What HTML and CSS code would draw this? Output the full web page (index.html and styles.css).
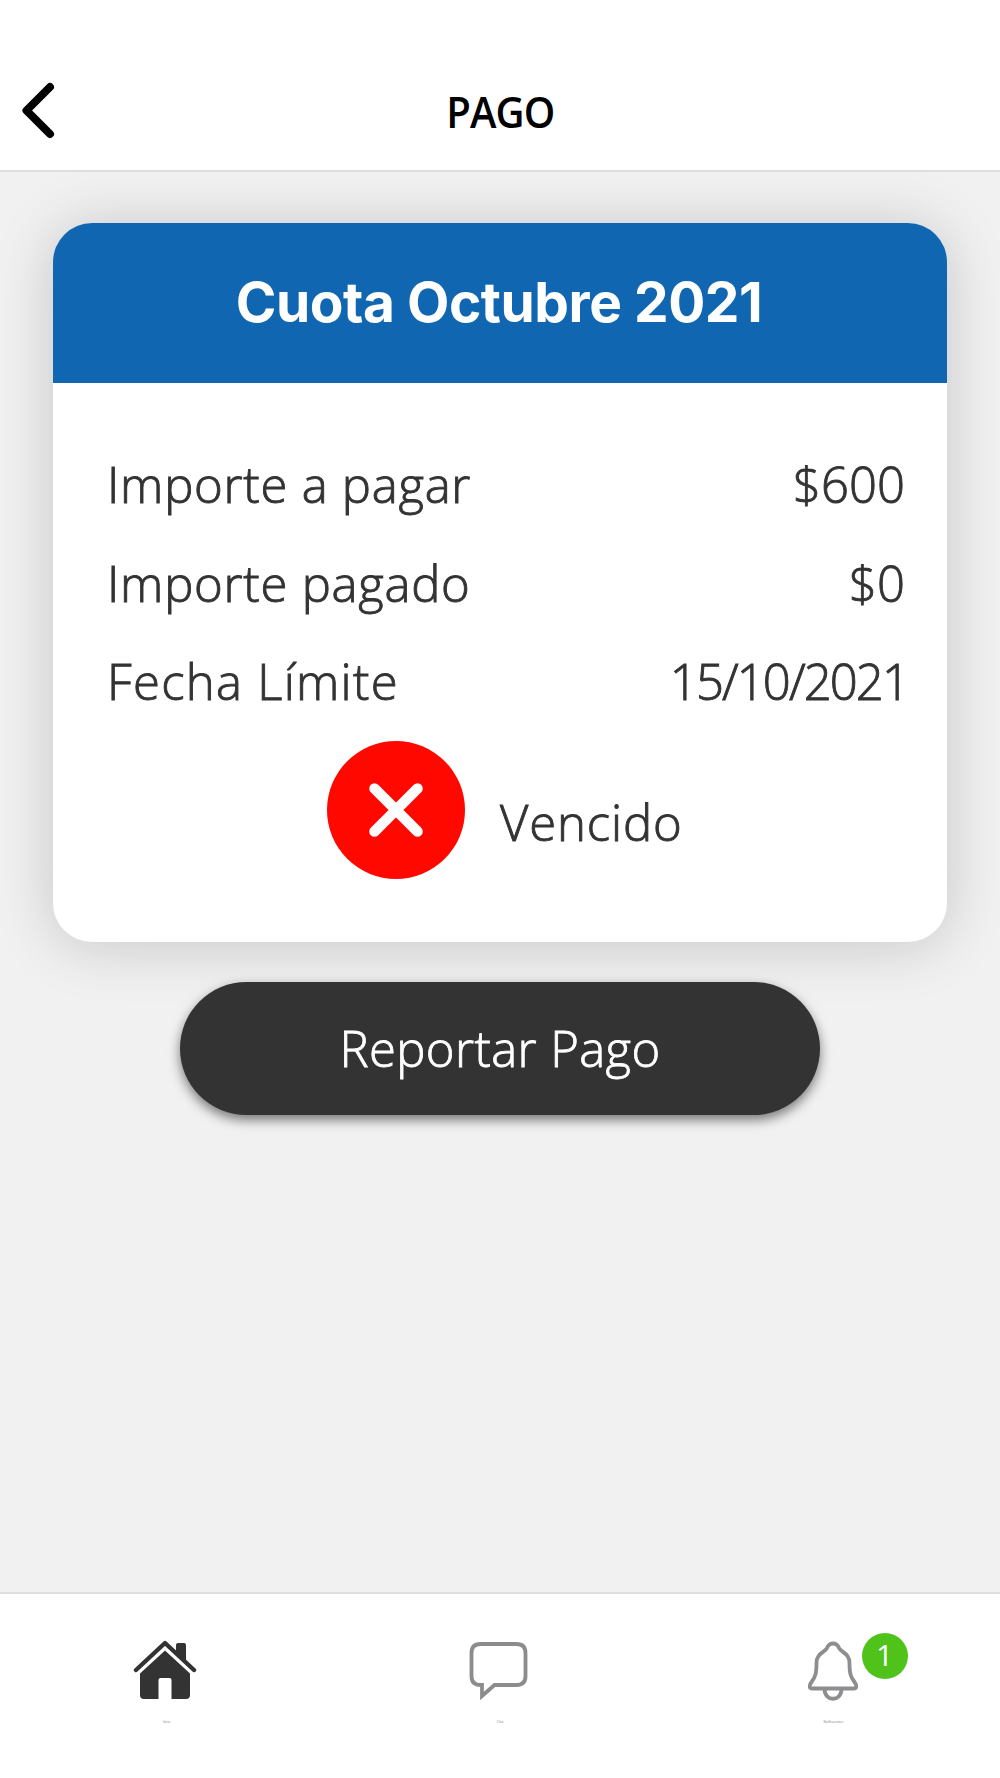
FILE: index.html
```html
<!DOCTYPE html>
<html lang="es">
<head>
<meta charset="utf-8">
<title>Pago</title>
<link rel="stylesheet" href="styles.css">
</head>
<body>
<div class="app">
  <header class="topbar">
    <svg class="back" viewBox="0 0 36 60" fill="none" stroke="#000" stroke-width="8" stroke-linecap="round" stroke-linejoin="round"><path d="M31 7 7.500 30.500 31 54"/></svg>
    <h1 class="title"><span>PAGO</span></h1>
  </header>
  <main class="content">
    <section class="card">
      <h2 class="card-head"><span>Cuota Octubre 2021</span></h2>
      <div class="card-body">
        <div class="row"><span class="amount-label">Importe a pagar</span><span class="amount">$600</span></div>
        <div class="row"><span class="amount-label">Importe pagado</span><span class="amount">$0</span></div>
        <div class="row"><span class="date-label">Fecha Límite</span><span class="date">15/10/2021</span></div>
        <div class="status">
          <svg class="status-icon" viewBox="0 0 138 138"><circle cx="69" cy="69" r="69" fill="#ff0800"/><path d="M47.500 47.500 90.500 90.500M90.500 47.500 47.500 90.500" stroke="#fff" stroke-width="10.500" stroke-linecap="round"/></svg>
          <span class="status-text">Vencido</span>
        </div>
      </div>
    </section>
    <button class="report"><span>Reportar Pago</span></button>
  </main>
  <nav class="tabs">
    <a class="tab active">
      <svg class="icon" viewBox="0 0 66 64"><path fill="#333" d="M7 34.500 32 11.500 57 34.500V56q0 4-4 4H38.500V41q0-2-2-2H27.500q-2 0-2 2v19H11q-4 0-4-4Z"/><path d="M2.500 29.500 32 2.500 61.500 29.500" fill="none" stroke="#fff" stroke-width="11"/><path d="M43 6q0-2 2-2h6q2 0 2 2V23L43 13Z" fill="#333"/><path d="M3 31 32 4 61 31" fill="none" stroke="#333" stroke-width="4.400" stroke-linecap="round" stroke-linejoin="round"/></svg>
      <span class="label">Inicio</span>
    </a>
    <a class="tab">
      <svg class="icon" viewBox="0 0 66 64" fill="none" stroke="#8c8c8c" stroke-width="3.800"><path d="M13.500 5H49.500Q58.500 5 58.500 14V37Q58.500 46 49.500 46H27.500L15 57V46H13.500Q4.500 46 4.500 37V14Q4.500 5 13.500 5Z"/></svg>
      <span class="label">Chat</span>
    </a>
    <a class="tab">
      <svg class="icon" viewBox="0 0 66 64" fill="none" stroke="#8e8e90" stroke-width="3.800" stroke-linejoin="round"><path d="M33 4.500C29.500 4.500 28 6.500 27 9C25 13.500 16.500 14 16.500 24C16.500 34 15.500 38 11.500 43C8.500 47 9.500 49.500 12.500 49.500H53.500C56.500 49.500 57.500 47 54.500 43C50.500 38 49.500 34 49.500 24C49.500 14 41 13.500 39 9C38 6.500 36.500 4.500 33 4.500Z"/><path d="M24.500 50C24.500 63 41.500 63 41.500 50"/></svg>
      <span class="label">Notificaciones</span>
      <span class="badge">1</span>
    </a>
  </nav>
</div>
</body>
</html>
```
FILE: styles.css
```css
* { box-sizing: border-box; }
body { margin: 0; }
.app {
  display: flex;
  flex-direction: column;
  width: 1000px;
  height: 1778px;
  background: #f1f1f1;
  color: #333;
  font-family: "Open Sans", sans-serif;
  font-size: 49px;
  font-weight: 300;
}
.topbar {
  display: grid;
  grid-template-columns: 60px 1fr 60px;
  align-items: center;
  height: 172px;
  padding-top: 50px;
  background: #fff;
  border-bottom: 2px solid #dedede;
}
.back { width: 36px; height: 60px; margin-left: 19px; }
.title {
  margin: 1px 0 0;
  text-align: center;
  color: #000;
  font-size: 44px;
  font-weight: 600;
  line-height: 60px;
  letter-spacing: -1px;
}
.title span { display: inline-block; transform: scaleX(.91); }
.content {
  flex: 1;
  display: flex;
  flex-direction: column;
  align-items: center;
  padding-top: 51px;
  overflow: hidden;
}
.card {
  width: 894px;
  height: 719px;
  border-radius: 39px;
  background: #fff;
  box-shadow: 0 3px 60px rgba(0, 0, 0, .18);
  overflow: hidden;
  flex: none;
}
.card-head {
  height: 160px;
  margin: 0;
  padding-right: 2px;
  background: #1066b0;
  color: #fff;
  text-align: center;
  font-family: Inter, sans-serif;
  font-size: 55px;
  font-weight: 680;
  line-height: 159px;
  letter-spacing: -.45px;
}
.card-body {
  padding: 54px 42px 0 54px;
  -webkit-text-stroke: .9px #333;
}
.row {
  display: flex;
  justify-content: space-between;
  height: 98.700px;
  line-height: 95px;
  white-space: nowrap;
}
.amount-label { letter-spacing: .75px; }
.date-label { letter-spacing: 1.300px; }
.date { margin-right: -3px; letter-spacing: -1.900px; }
.status {
  display: flex;
  align-items: center;
  padding-left: 220px;
  margin-top: 8px;
}
.status-icon { width: 138px; height: 138px; flex: none; }
.status-text { margin-left: 35px; padding-top: 23px; line-height: 60px; letter-spacing: .9px; }
.report {
  width: 640px;
  height: 133px;
  margin-top: 40px;
  padding: 0 0 2px;
  border: 0;
  border-radius: 67px;
  background: #333;
  color: #fff;
  box-shadow: 0 5px 12px rgba(0, 0, 0, .5);
  font: inherit;
  letter-spacing: .4px;
  -webkit-text-stroke: .8px #fff;
  flex: none;
}
.tabs {
  display: grid;
  grid-template-columns: repeat(3, 1fr);
  height: 186px;
  background: #fff;
  border-top: 2px solid #dedede;
}
.tab {
  position: relative;
  display: flex;
  flex-direction: column;
  align-items: center;
  padding-top: 45px;
}
.icon { width: 66px; height: 64px; }
.active .icon { margin-right: 1px; }
.label { margin-top: 15px; font-size: 3px; font-weight: 400; line-height: 8px; color: #777; }
.badge {
  position: absolute;
  top: 39px;
  left: 195px;
  width: 46px;
  height: 46px;
  border-radius: 50%;
  background: #50c31b;
  color: #fff;
  font-size: 30px;
  font-weight: 400;
  line-height: 44px;
  text-align: center;
}
```
